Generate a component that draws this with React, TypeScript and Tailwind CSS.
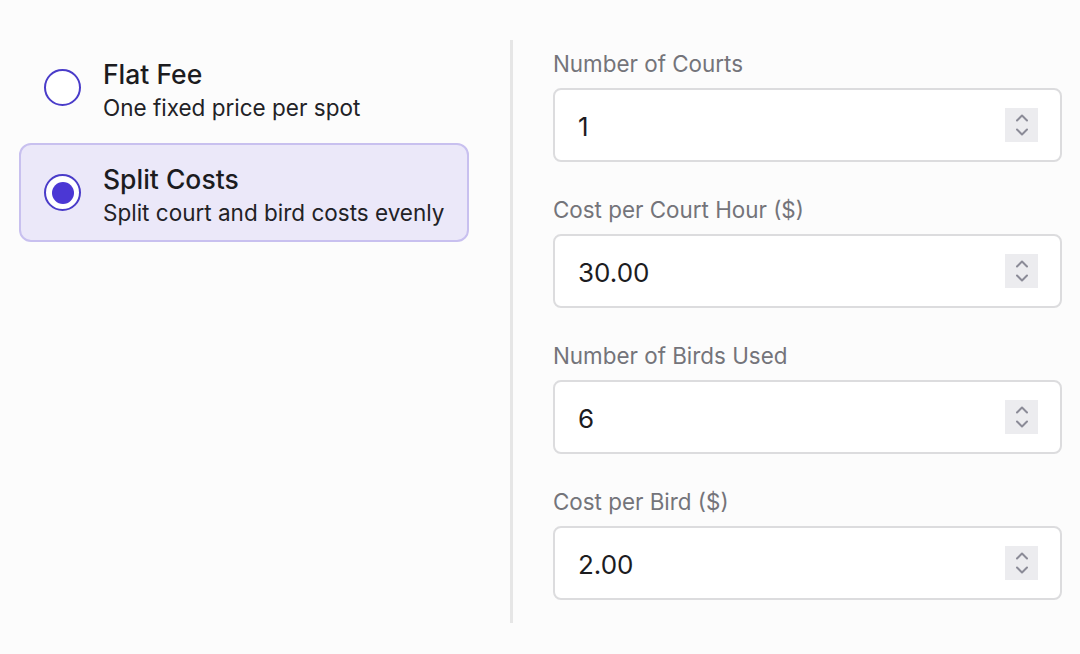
import { useState } from "react"

const fields = [
 { label: "Number of Courts", value: "1" },
 { label: "Cost per Court Hour ($)", value: "30.00" },
 { label: "Number of Birds Used", value: "6" },
 { label: "Cost per Bird ($)", value: "2.00" },
]

const options = [
 { id: "flat", title: "Flat Fee", desc: "One fixed price per spot" },
 { id: "split", title: "Split Costs", desc: "Split court and bird costs evenly" },
]

function Spinner(){
 return (
  <div className="w-[33px] h-[34px] bg-[#ececef] flex flex-col items-center justify-center gap-[6px]">
   <svg width="14" height="8" viewBox="0 0 14 8" fill="none">
    <path d="M2 6.5 L7 1.5 L12 6.5" stroke="#8b8b97" strokeWidth="2" strokeLinecap="round" strokeLinejoin="round" />
   </svg>
   <svg width="14" height="8" viewBox="0 0 14 8" fill="none">
    <path d="M2 1.5 L7 6.5 L12 1.5" stroke="#8b8b97" strokeWidth="2" strokeLinecap="round" strokeLinejoin="round" />
   </svg>
  </div>
 )
}

export default function App(){

 const [mode, setMode] = useState("split")

 return (
  <div className="min-h-[654px] bg-[#fcfcfc] flex pl-[19px] pr-[18px] pt-[38px] pb-[31px] font-['Inter',sans-serif]">

   <div className="w-[450px] flex flex-col gap-[6px]">
    {options.map(o=>{
     const active = mode === o.id
     return (
      <button
       key={o.id}
       onClick={()=>setMode(o.id)}
       className={"flex items-center gap-[22px] h-[99px] px-[23px] rounded-[12px] border-2 text-left " + (active ? "bg-[#ebe8f9] border-[#c8c0ef]" : "bg-transparent border-transparent")}
      >
       <span className="w-[37px] h-[37px] rounded-full border-2 border-[#4a3cc9] bg-white flex items-center justify-center shrink-0">
        {active && <span className="w-[22px] h-[22px] rounded-full bg-[#4b37d4]" />}
       </span>
       <span className="flex flex-col pt-[6px] whitespace-nowrap">
        <span className="text-[26.5px] leading-[33px] font-medium text-[#1c1c1f]">{o.title}</span>
        <span className="text-[22.5px] leading-[33px] text-[#222226]">{o.desc}</span>
       </span>
      </button>
     )
    })}
   </div>

   <div className="ml-[41px] mr-[40px] mt-[2px] w-[3px] bg-[#e6e6e6]" />

   <div className="flex-1 flex flex-col gap-[34px] pt-[12px]">
    {fields.map(f=>(
     <div key={f.label} className="flex flex-col gap-[10px]">
      <label className="text-[22.4px] leading-[28px] text-[#74747a]">{f.label}</label>
      <div className="h-[74px] bg-white border-2 border-[#dcdcde] rounded-[8px] flex items-center pl-[23px] pr-[22px]">
       <span className="flex-1 pt-[3px] text-[26px] text-[#1c1c1f]">{f.value}</span>
       <Spinner />
      </div>
     </div>
    ))}
   </div>

  </div>
 )

}
